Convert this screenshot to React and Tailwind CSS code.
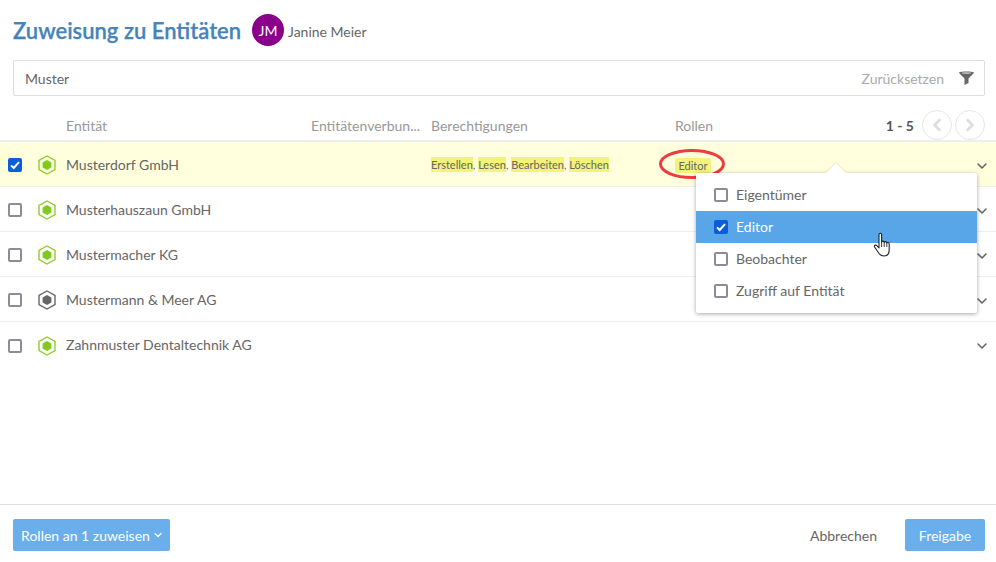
import React from "react";
import { ChevronDown, ChevronLeft, ChevronRight } from "lucide-react";

const rows = [
  ["Musterdorf GmbH", "green", true],
  ["Musterhauszaun GmbH", "green", false],
  ["Mustermacher KG", "green", false],
  ["Mustermann & Meer AG", "gray", false],
  ["Zahnmuster Dentaltechnik AG", "green", false],
];

function Check({ on }) {
  return on ? (
    <span className="flex h-[14px] w-[14px] shrink-0 items-center justify-center rounded-[2px] bg-[#0a5fd8]">
      <svg viewBox="0 0 14 14" className="h-[14px] w-[14px]">
        <path d="M3 7.4 L5.7 10 L11 4.2" fill="none" stroke="#fff" strokeWidth="2" />
      </svg>
    </span>
  ) : (
    <span className="block h-[14px] w-[14px] shrink-0 rounded-[2px] border-2 border-[#8d8b9b] bg-white" />
  );
}

function Hex({ kind }) {
  const c = kind === "green" ? "#8fce2e" : "#666666";
  const f = kind === "green" ? "#7fcb1d" : "#666666";
  return (
    <svg viewBox="0 0 18 20" className="h-[20px] w-[18px] shrink-0">
      <path d="M9 1 L17 5.5 V14.5 L9 19 L1 14.5 V5.5 Z" fill="none" stroke={c} strokeWidth="1.4" />
      <path d="M9 5 L13.4 7.5 V12.5 L9 15 L4.6 12.5 V7.5 Z" fill={f} />
    </svg>
  );
}

function Mark({ children }) {
  return <span className="inline-block bg-[#f3f37c] leading-[15px]">{children}</span>;
}

export default function App() {
  return (
    <div className="relative flex h-[562px] w-[996px] flex-col overflow-hidden bg-white font-['Lato','Open_Sans',sans-serif] text-[14px] text-[#666]">
      <div className="flex h-[60px] items-center px-[13px]">
        <h1 className="w-[229px] pt-[2px] text-[22px] leading-none font-semibold whitespace-nowrap text-[#4583bb] [-webkit-text-stroke:0.25px_#4583bb]">Zuweisung zu Entitäten</h1>
        <span className="ml-[10px] flex h-[32px] w-[32px] items-center justify-center rounded-full bg-[#8b008b] text-[14px] text-white">JM</span>
        <span className="ml-[4px] pt-[2px]">Janine Meier</span>
      </div>

      <div className="mr-[11px] ml-[13px] flex h-[36px] items-center rounded-[2px] border border-[#ddd] pr-[9px] pl-[11px]">
        <span className="flex-1">Muster</span>
        <span className="text-[#aaa]">Zurücksetzen</span>
        <svg viewBox="0 0 16 14" className="ml-[14px] h-[14px] w-[17px]">
          <path d="M0.5 1.5 C0.5 0 15.5 0 15.5 1.5 C15.5 2.6 10 7 10 7.5 V12 L6 14 V7.5 C6 7 0.5 2.6 0.5 1.5 Z" fill="#666" />
          <ellipse cx="8" cy="2" rx="5" ry="0.8" fill="#ccc" />
        </svg>
      </div>

      <div className="flex h-[46px] items-end border-b-2 border-[#eee] pr-[11px] text-[#999]">
        <div className="grid flex-1 grid-cols-[66px_245px_120px_244px_1fr] items-center pb-[4px]">
          <span />
          <span className="col-start-2">Entität</span>
          <span className="whitespace-nowrap">Entitätenverbun...</span>
          <span className="whitespace-nowrap">Berechtigungen</span>
          <span>Rollen</span>
        </div>
        <div className="flex items-center">
          <span className="mr-[8px] font-bold text-[#555]">1 - 5</span>
          <span className="flex h-[30px] w-[30px] items-center justify-center rounded-full border border-[#e6e6e6] text-[#ddd]">
            <ChevronLeft size={20} strokeWidth={3} />
          </span>
          <span className="ml-[3px] flex h-[30px] w-[30px] items-center justify-center rounded-full border border-[#e6e6e6] text-[#ddd]">
            <ChevronRight size={20} strokeWidth={3} />
          </span>
        </div>
      </div>

      <div className="flex-1">
        {rows.map(([name, kind, on], i) => (
          <div
            key={name}
            className={
              "flex h-[45px] items-center pr-[6px] pl-[8px] " +
              (i < 4 ? "border-b border-[#eee] " : "") +
              (on ? "bg-[#ffffdd]" : "bg-white")
            }
          >
            <span className="pt-[2px]"><Check on={on} /></span>
            <span className="ml-[16px] pt-[2px]"><Hex kind={kind} /></span>
            <span className="ml-[10px] w-[365px] shrink-0">{name}</span>
            {on ? (
              <>
                <span className="w-[244px] shrink-0 pt-[2px] text-[11px]">
                  <Mark>Erstellen</Mark>, <Mark>Lesen</Mark>, <Mark>Bearbeiten</Mark>, <Mark>Löschen</Mark>
                </span>
                <span className="mt-[2px] w-[36px] rounded-[2px] bg-[#f3f37c] text-center text-[11px] leading-[15px]">Editor</span>
              </>
            ) : null}
            <span className="ml-auto pt-[3px]">
              <ChevronDown size={16} strokeWidth={2.4} className="text-[#666]" />
            </span>
          </div>
        ))}
      </div>

      <div className="flex h-[58px] items-start justify-between border-t border-[#ddd] pt-[14px] pr-[11px] pl-[13px]">
        <button className="flex h-[32px] w-[157px] items-center justify-center gap-[2px] rounded-[2px] bg-[#6aaeeb] pl-[2px] text-white">
          Rollen an 1 zuweisen
          <ChevronDown size={12} strokeWidth={2.5} />
        </button>
        <div className="flex items-center">
          <span className="mr-[28px]">Abbrechen</span>
          <button className="h-[32px] w-[80px] rounded-[2px] bg-[#6aaeeb] text-white">Freigabe</button>
        </div>
      </div>

      {/* red annotation */}
      <svg viewBox="0 0 66 30" className="absolute top-[149px] left-[659px] h-[30px] w-[66px]">
        <ellipse cx="33" cy="15" rx="31.5" ry="13.5" fill="none" stroke="#ee3b3b" strokeWidth="3" />
      </svg>

      {/* dropdown */}
      <div className="absolute top-[173px] left-[696px] w-[281px] rounded-[2px] bg-white py-[6px] shadow-[0_1px_4px_rgba(0,0,0,0.35)]">
        <div className="absolute top-[-7px] left-[133px] h-[14px] w-[14px] rotate-45 bg-white shadow-[-1px_-1px_1px_rgba(0,0,0,0.08)]" />
        {[["Eigentümer", false], ["Editor", true], ["Beobachter", false], ["Zugriff auf Entität", false]].map(([t, on]) => (
          <div key={t} className={"relative flex h-[32px] items-center pl-[18px] " + (on ? "bg-[#58a5e8] text-white" : "")}>
            <Check on={on} />
            <span className="ml-[8px] pb-[2px]">{t}</span>
          </div>
        ))}
      </div>

      {/* hand cursor */}
      <svg viewBox="0 0 20 26" className="absolute top-[232px] left-[873px] h-[26px] w-[20px]">
        <path
          d="M6 2.5 C6 0.8 8.6 0.8 8.6 2.5 V10 C9 8.8 11 8.8 11.2 10.4 C11.6 9.2 13.6 9.4 13.8 11 C14.4 10 16.2 10.4 16.2 12 V18 C16.2 21.5 14.5 24 11 24 C7.5 24 6.5 22.5 5 20 L1.6 15 C0.8 13.6 2.6 12.4 3.8 13.6 L6 16 Z"
          fill="#fff"
          stroke="#222"
          strokeWidth="1.1"
          strokeLinejoin="round"
        />
        <path d="M8.6 10 V15 M11.2 10.4 V15 M13.8 11 V15" stroke="#222" strokeWidth="0.9" fill="none" />
      </svg>
    </div>
  );
}
